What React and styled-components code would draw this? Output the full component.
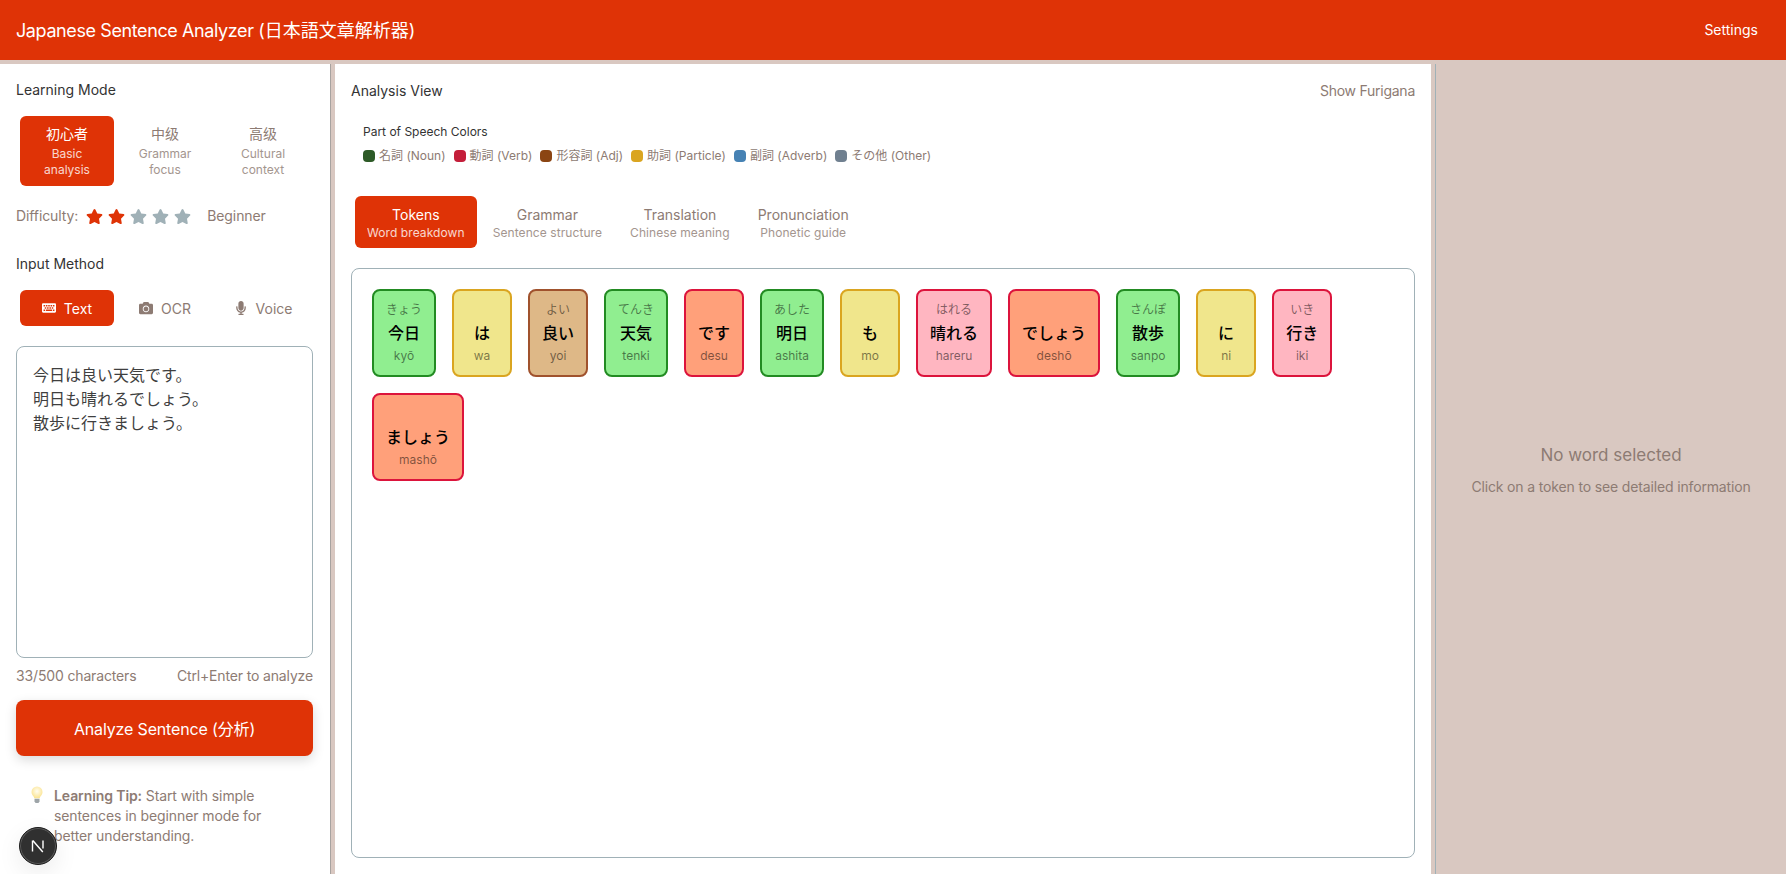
import React from "react";
import styled, { createGlobalStyle } from "styled-components";
import { FaKeyboard, FaCamera, FaMicrophone, FaStar } from "react-icons/fa";

const PRIMARY = "#df3306";
const MUTED = "#8d7b73";
const LINE = "#a0b1b7";
const SAND = "#d9c8c1";

const modes = [
  { title: "初心者", sub: "Basic analysis", active: true },
  { title: "中级", sub: "Grammar focus" },
  { title: "高级", sub: "Cultural context" },
];

const inputs = [
  { label: "Text", Icon: FaKeyboard, active: true },
  { label: "OCR", Icon: FaCamera },
  { label: "Voice", Icon: FaMicrophone },
];

const legend = [
  { label: "名詞 (Noun)", color: "#2d5a27" },
  { label: "動詞 (Verb)", color: "#c41e3a" },
  { label: "形容詞 (Adj)", color: "#8b4513" },
  { label: "助詞 (Particle)", color: "#daa520" },
  { label: "副詞 (Adverb)", color: "#4682b4" },
  { label: "その他 (Other)", color: "#708090" },
];

const views = [
  { title: "Tokens", sub: "Word breakdown", active: true },
  { title: "Grammar", sub: "Sentence structure" },
  { title: "Translation", sub: "Chinese meaning" },
  { title: "Pronunciation", sub: "Phonetic guide" },
];

const tokenColors = {
  noun: ["#90ee90", "#228b22"],
  particle: ["#f0e68c", "#daa520"],
  adj: ["#deb887", "#a0522d"],
  aux: ["#ffa07a", "#dc143c"],
  verb: ["#ffb6c1", "#dc143c"],
};

const tokens = [
  { word: "今日", kana: "きょう", roman: "kyō", kind: "noun" },
  { word: "は", kana: "", roman: "wa", kind: "particle" },
  { word: "良い", kana: "よい", roman: "yoi", kind: "adj" },
  { word: "天気", kana: "てんき", roman: "tenki", kind: "noun" },
  { word: "です", kana: "", roman: "desu", kind: "aux" },
  { word: "明日", kana: "あした", roman: "ashita", kind: "noun" },
  { word: "も", kana: "", roman: "mo", kind: "particle" },
  { word: "晴れる", kana: "はれる", roman: "hareru", kind: "verb" },
  { word: "でしょう", kana: "", roman: "deshō", kind: "aux" },
  { word: "散歩", kana: "さんぽ", roman: "sanpo", kind: "noun" },
  { word: "に", kana: "", roman: "ni", kind: "particle" },
  { word: "行き", kana: "いき", roman: "iki", kind: "verb" },
  { word: "ましょう", kana: "", roman: "mashō", kind: "aux" },
];

const BulbIcon = () => (
  <svg width="12" height="18" viewBox="0 0 12 18">
    <defs>
      <radialGradient id="bulbGlow" cx="50%" cy="40%" r="60%">
        <stop offset="0%" stopColor="#fffdf0" />
        <stop offset="100%" stopColor="#fbe38e" />
      </radialGradient>
    </defs>
    <path
      d="M6 .5A5.500 5.500 0 0 0 .5 6c0 2.200 1.300 3.300 2.100 4.600.4.700.6 1.200.7 1.700h5.400c.1-.5.300-1 .7-1.700C10.200 9.300 11.500 8.200 11.500 6A5.500 5.500 0 0 0 6 .5z"
      fill="url(#bulbGlow)"
    />
    <path d="M3.500 12.800h5v2.400l-1 1.800h-3l-1-1.800z" fill="#9ea5a8" />
  </svg>
);

const App = () => (
  <>
    <GlobalStyle />
    <Page>
      <Header>
        <AppTitle>
          Japanese Sentence Analyzer <TitleCjk>(日本語文章解析器)</TitleCjk>
        </AppTitle>
        <SettingsBtn>Settings</SettingsBtn>
      </Header>
      <Body>
        <Sidebar>
          <SectionTitle>Learning Mode</SectionTitle>
          <ModeGroup>
            {modes.map((m) => (
              <ModeBtn key={m.title} $active={m.active}>
                <ModeTitle>{m.title}</ModeTitle>
                <ModeSub>{m.sub}</ModeSub>
              </ModeBtn>
            ))}
          </ModeGroup>
          <DifficultyRow>
            <span>Difficulty:</span>
            <Stars>
              {[0, 1, 2, 3, 4].map((i) => (
                <FaStar key={i} size={17} color={i < 2 ? PRIMARY : LINE} />
              ))}
            </Stars>
            <span>Beginner</span>
          </DifficultyRow>
          <InputTitle>Input Method</InputTitle>
          <InputGroup>
            {inputs.map(({ label, Icon, active }) => (
              <InputBtn key={label} $active={active}>
                <Icon size={14} />
                {label}
              </InputBtn>
            ))}
          </InputGroup>
          <SentenceInput
            defaultValue={"今日は良い天気です。\n明日も晴れるでしょう。\n散歩に行きましょう。"}
          />
          <InputMeta>
            <span>33/500 characters</span>
            <span>Ctrl+Enter to analyze</span>
          </InputMeta>
          <AnalyzeBtn>Analyze Sentence (分析)</AnalyzeBtn>
          <Tip>
            <TipIcon>
              <BulbIcon />
            </TipIcon>
            <p>
              <b>Learning Tip:</b> Start with simple sentences in beginner mode
              for better understanding.
            </p>
          </Tip>
        </Sidebar>

        <Main>
          <MainHead>
            <MainTitle>Analysis View</MainTitle>
            <FuriganaToggle>Show Furigana</FuriganaToggle>
          </MainHead>
          <Legend>
            <LegendTitle>Part of Speech Colors</LegendTitle>
            <LegendRow>
              {legend.map((l) => (
                <LegendItem key={l.label}>
                  <Dot $color={l.color} />
                  {l.label}
                </LegendItem>
              ))}
            </LegendRow>
          </Legend>
          <ViewTabs>
            {views.map((v) => (
              <ViewTab key={v.title} $active={v.active}>
                <ViewTitle>{v.title}</ViewTitle>
                <ViewSub>{v.sub}</ViewSub>
              </ViewTab>
            ))}
          </ViewTabs>
          <TokenPanel>
            {tokens.map((t) => (
              <Token key={t.word} $kind={t.kind}>
                <Kana>{t.kana}</Kana>
                <Word>{t.word}</Word>
                <Roman>{t.roman}</Roman>
              </Token>
            ))}
          </TokenPanel>
        </Main>

        <Detail>
          <DetailTitle>No word selected</DetailTitle>
          <DetailHint>Click on a token to see detailed information</DetailHint>
        </Detail>
      </Body>
      <DevBadge>
        <svg width="16" height="16" viewBox="0 0 16 16">
          <path d="M2.500 2.500v11M2.800 2.500l10 11.500M13 2.500v8" stroke="#fff" strokeWidth="1.400" fill="none" />
        </svg>
      </DevBadge>
    </Page>
  </>
);

export default App;

const GlobalStyle = createGlobalStyle`
  * {
    box-sizing: border-box;
  }
  html, body {
    margin: 0;
    height: 100%;
    overflow: hidden;
    font-family: Inter, "Noto Sans CJK JP", "Noto Sans", sans-serif;
  }
  p {
    margin: 0;
  }
  b {
    font-weight: 600;
  }
`;

const Page = styled.div`
  display: flex;
  flex-direction: column;
  height: 100vh;
  background: ${SAND};
`;

const Header = styled.header`
  display: flex;
  align-items: center;
  justify-content: space-between;
  flex: 0 0 60px;
  padding: 0 28px 2px 16px;
  background: ${PRIMARY};
  color: #fff;
`;

const AppTitle = styled.h1`
  margin: 0;
  font-size: 18px;
  font-weight: 400;
  letter-spacing: -0.4px;
`;

const TitleCjk = styled.span`
  letter-spacing: 0;
`;

const SettingsBtn = styled.span`
  font-size: 14px;
`;

const Body = styled.div`
  display: flex;
  flex: 1;
  gap: 4px;
  min-height: 0;
  padding-top: 4px;
`;

const Sidebar = styled.aside`
  flex: 0 0 330px;
  padding: 16px 16px 0;
  background: #fff;
  border-right: 1px solid #a8a3a0;
`;

const SectionTitle = styled.h2`
  margin: 0;
  font-size: 14px;
  font-weight: 400;
  line-height: 20px;
  color: #333;
`;

const ModeGroup = styled.div`
  display: grid;
  grid-template-columns: repeat(3, 94px);
  gap: 4px;
  padding: 4px;
  margin-top: 12px;
`;

const ModeBtn = styled.div`
  display: flex;
  flex-direction: column;
  align-items: center;
  height: 70px;
  padding: 8px 12px;
  border-radius: 6px;
  text-align: center;
  background: ${(p) => (p.$active ? PRIMARY : "transparent")};
  color: ${(p) => (p.$active ? "#fff" : MUTED)};
`;

const ModeTitle = styled.span`
  font-size: 14px;
  font-weight: 400;
  line-height: 20px;
`;

const ModeSub = styled.span`
  margin-top: 2px;
  font-size: 12px;
  line-height: 16px;
  opacity: 0.8;
`;

const DifficultyRow = styled.div`
  display: flex;
  align-items: center;
  margin-top: 16px;
  font-size: 14px;
  line-height: 20px;
  letter-spacing: -0.1px;
  color: ${MUTED};
`;

const Stars = styled.span`
  display: flex;
  gap: 5px;
  margin: 0 16px 0 8px;
`;

const InputTitle = styled(SectionTitle)`
  margin-top: 28px;
`;

const InputGroup = styled(ModeGroup)`
  margin-top: 12px;
`;

const InputBtn = styled.div`
  display: flex;
  align-items: center;
  justify-content: center;
  gap: 8px;
  height: 36px;
  border-radius: 6px;
  font-size: 14px;
  font-weight: 400;
  background: ${(p) => (p.$active ? PRIMARY : "transparent")};
  color: ${(p) => (p.$active ? "#fff" : MUTED)};
`;

const SentenceInput = styled.textarea`
  display: block;
  width: 297px;
  height: 312px;
  margin-top: 16px;
  padding: 16px;
  border: 1px solid ${LINE};
  border-radius: 8px;
  outline: none;
  resize: none;
  font-family: inherit;
  font-size: 16px;
  line-height: 24px;
  color: #3f3f3f;
`;

const InputMeta = styled.div`
  display: flex;
  justify-content: space-between;
  width: 297px;
  margin-top: 8px;
  font-size: 14px;
  line-height: 20px;
  letter-spacing: -0.15px;
  color: ${MUTED};
`;

const AnalyzeBtn = styled.div`
  display: flex;
  align-items: center;
  justify-content: center;
  width: 297px;
  height: 56px;
  margin-top: 14px;
  border-radius: 8px;
  background: ${PRIMARY};
  color: #fff;
  font-size: 16px;
  font-weight: 400;
  letter-spacing: -0.15px;
  box-shadow: 0 4px 12px rgba(0, 0, 0, 0.15);
`;

const Tip = styled.div`
  display: flex;
  gap: 11px;
  width: 280px;
  margin-top: 30px;
  padding-left: 15px;
  font-size: 14px;
  line-height: 20px;
  letter-spacing: -0.1px;
  color: ${MUTED};
`;

const TipIcon = styled.span`
  flex: 0 0 12px;
  height: 18px;
`;

const Main = styled.main`
  display: flex;
  flex-direction: column;
  flex: 0 0 1096px;
  padding: 16px;
  background: #fff;
`;

const MainHead = styled.div`
  display: flex;
  align-items: center;
  justify-content: space-between;
  height: 20px;
`;

const MainTitle = styled.h2`
  margin: 0;
  font-size: 14px;
  font-weight: 400;
  color: #333;
`;

const FuriganaToggle = styled.span`
  font-size: 14px;
  letter-spacing: -0.25px;
  color: ${MUTED};
`;

const Legend = styled.div`
  margin-top: 23px;
  padding: 0 12px;
`;

const LegendTitle = styled.div`
  font-size: 12px;
  font-weight: 400;
  line-height: 18px;
  color: #333;
`;

const LegendRow = styled.div`
  display: flex;
  gap: 8px;
  margin-top: 6px;
`;

const LegendItem = styled.span`
  display: flex;
  align-items: center;
  gap: 4px;
  font-size: 12px;
  line-height: 18px;
  color: ${MUTED};
`;

const Dot = styled.i`
  width: 12px;
  height: 12px;
  border-radius: 4px;
  background: ${(p) => p.$color};
`;

const ViewTabs = styled.div`
  display: flex;
  gap: 4px;
  margin-top: 31px;
  padding: 0 4px;
`;

const ViewTab = styled.div`
  display: flex;
  flex-direction: column;
  align-items: center;
  height: 52px;
  padding: 9px 12px;
  border-radius: 6px;
  background: ${(p) => (p.$active ? PRIMARY : "transparent")};
  color: ${(p) => (p.$active ? "#fff" : MUTED)};
`;

const ViewTitle = styled.span`
  font-size: 14px;
  font-weight: 400;
  line-height: 20px;
`;

const ViewSub = styled.span`
  font-size: 12px;
  line-height: 16px;
  letter-spacing: 0.08px;
  opacity: 0.8;
`;

const TokenPanel = styled.div`
  display: flex;
  flex-wrap: wrap;
  align-content: flex-start;
  gap: 16px;
  flex: 1;
  margin-top: 20px;
  padding: 20px;
  border: 1px solid ${LINE};
  border-radius: 8px;
`;

const Token = styled.div`
  display: flex;
  flex-direction: column;
  align-items: center;
  height: 88px;
  min-width: 60px;
  padding: 10px 12px;
  border-radius: 8px;
  border: 2px solid ${(p) => tokenColors[p.$kind][1]};
  background: ${(p) => tokenColors[p.$kind][0]};
`;

const Kana = styled.span`
  height: 18px;
  font-size: 12px;
  line-height: 18px;
  color: rgba(0, 0, 0, 0.5);
`;

const Word = styled.span`
  margin: 2px 0;
  font-size: 16px;
  font-weight: 500;
  line-height: 24px;
  color: #000;
`;

const Roman = styled.span`
  font-size: 12px;
  line-height: 18px;
  color: rgba(0, 0, 0, 0.5);
`;

const Detail = styled.section`
  display: flex;
  flex-direction: column;
  align-items: center;
  justify-content: center;
  flex: 1;
  border-left: 1px solid ${LINE};
  color: ${MUTED};
`;

const DetailTitle = styled.div`
  font-size: 17px;
  line-height: 28px;
`;

const DetailHint = styled.div`
  margin-top: 8px;
  font-size: 14px;
  line-height: 20px;
  letter-spacing: -0.15px;
`;

const DevBadge = styled.div`
  position: fixed;
  left: 19px;
  bottom: 9px;
  display: flex;
  align-items: center;
  justify-content: center;
  width: 38px;
  height: 38px;
  border-radius: 50%;
  background: #303030;
  border: 1px solid #1c1c1c;
  box-shadow: inset 0 0 0 1px #5a5a5a, 0 8px 24px rgba(0, 0, 0, 0.08);
`;
